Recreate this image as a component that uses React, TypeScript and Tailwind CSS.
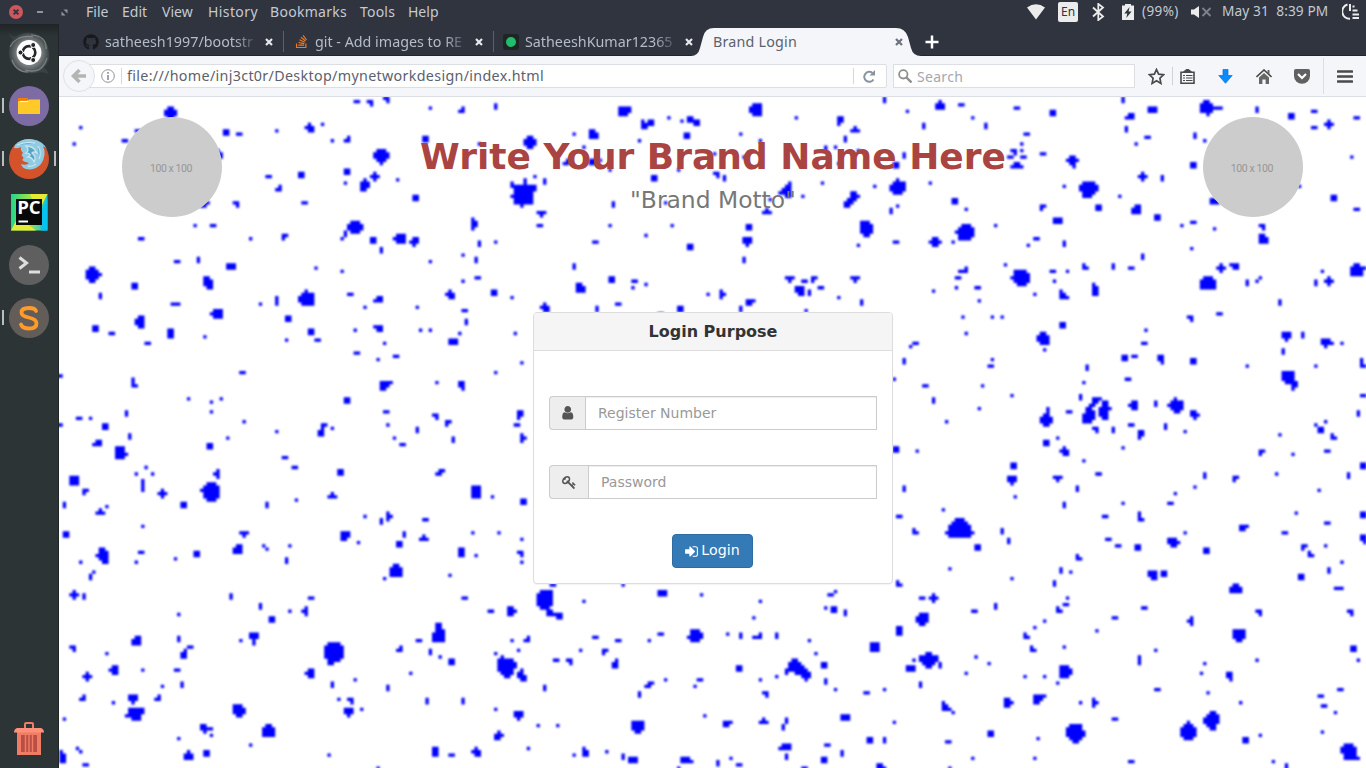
import React from "react";
import { FaGithub, FaStackOverflow } from "react-icons/fa";

/* ---------- speckled wallpaper ---------- */

const SHAPES: Record<string, string> = {
  s: "1", h: "11", v: "1/1", q: "11/11", t: "111", V: "1/1/1", H: "111/111",
  a: "01/11", c: "11/01", d: "11/10", e: "10/11", p: "010/111/010",
  u: "010/111", n: "111/010", r: "10/11/10", l: "01/11/01",
};

type Patch = { ox: number; oy: number; kx: number; marks: string };

const PATCHES: Patch[] = [
  { ox: 0, oy: 0, kx: 3, marks: "335,45,0110/1111/1111/0110 65,91,s 45,140,s 197,131,h 237,100,h 501,106,q 541,111,h 653,101,s 790,82,s 752,92,010/111/011 820,131,s 865,126,a 893,14,h 933,17,c 983,8,11/01 1114,33,s 1208,38,a 1310,28,v 1100,125,q 1261,140,s 968,180,01110/11111/11111/01110/00100 864,224,q 947,238,p 859,258,s 918,263,010/111/111/110 1016,248,s 1070,302,q 628,238,h 727,234,q 659,273,a 737,317,h 531,321,c 440,320,011/110 485,172,10/11/11 408,385,s 462,385,h 574,425,s 246,425,h 677,419,d 850,425,s 858,410,v 889,390,01110/11111/11111/01110 942,430,q 967,459,v 1023,425,0111/1111/0111 1067,433,011/111/010 1246,380,10/11/11/10 1261,439,v 1310,434,s 1212,473,s 1251,488,v 1114,493,s 1212,552,s 1256,542,h 1305,586,q 1173,592,010/111/011 1216,640,h 1075,631,s 918,631,s 960,606,011/111 874,591,h 850,523,s 771,513,s 742,602,00100/01111/11111/11111/01111 653,611,V 604,621,s 688,658,h 476,650,0111/1111/0111 246,658,h 349,621,t 447,557,110/111/111/011 517,508,H 418,488,v 354,493,h 227,566,q 124,596,v 104,532,01100/11110/11111/11110/01100" },
  { ox: 440, oy: 0, kx: 3, marks: "377,42,1111/1111/1110 447,82,1011/1111/1100 510,62,s 549,72,s 573,67,q 593,77,q 564,116,q 284,111,110/111/111 225,111,s 255,150,s 421,130,s 93,135,0110/1111/1111/0110 770,38,0111/1111/1111/0111 892,62,s 725,111,s 784,130,s 1024,72,11/11/10 1069,98,u 1039,126,v 1156,3,v 1225,43,s 1274,87,v 199,197,a 280,193,q 304,190,s 333,219,s 647,170,s 735,180,s 539,217,s 465,243,q 653,233,c 676,243,v 980,150,v 1010,150,s 1078,160,s 1019,199,s 1216,174,v 1191,204,q 107,238,s 137,253,v 39,263,v 75,288,00001000/00001000/01111111/01111111/01111110/11111110/01111110/01111110/00010000 343,321,v 500,317,s 127,350,n 122,385,h 333,385,s 519,385,s 441,415,s 289,434,h 573,449,q 225,508,v 338,547,q 406,552,h 402,572,s 441,562,s 244,572,110/111/111 39,601,s 137,631,010/111/011 294,635,v 358,621,h 544,635,q 485,650,h 627,591,s 671,591,r 725,635,v 754,616,111/110 872,546,n 916,552,h 945,547,d 965,572,h 902,581,111/111/011 931,586,v 1069,546,n 1019,601,s 1088,616,v 921,640,s 735,488,v 745,432,111/111/010 750,390,q 804,345,u 855,279,0001/0011/0111/1111/0011 813,307,s 911,297,s 970,258,s 1127,268,s 1195,270,00100/01111/11111/11111/01110 1196,327,s 1176,341,v 1294,258,s 1059,308,00110/00111/01110/11100/11000 1103,395,1110/1111/1111/1111/0110 1078,444,s 1191,434,h 1303,581,s" },
  { ox: 867, oy: 0, kx: 3, marks: "42,25,010/111/111 106,23,h 140,62,s 179,87,v 273,33,h 380,47,q 591,8,v 612,57,011/111 679,38,H 601,96,v 665,121,h 630,140,s 302,111,h 287,140,s 262,165,c 287,160,s 253,180,h 292,180,h 272,202,0110/1111 351,170,h 439,194,0110/1111/0110/0010 13,258,s 414,268,s 489,277,011110/111111/111111/011110/011100 650,238,p 709,243,v 581,297,s 87,312,q 120,336,s 350,331,d 517,331,q 631,337,011/111/111 694,361,q 395,371,H 117,405,001110/011111/111111/011111/011110 209,385,s 28,434,0110/1111/0110 82,434,s 307,444,s 331,425,h 414,439,v 650,478,v 238,503,s 111,518,001/111 96,542,h 91,572,s 23,581,s 155,572,h 160,611,s 111,658,s 199,658,s 229,658,s 283,542,011110/011111/111111/011111/001110 380,523,h 424,523,s 385,552,s 327,591,s 414,592,100/110/111 479,508,e 561,508,v 616,513,h 508,577,10/11/11/11 855,33,0110000/1111000/1111111/1111000/0010000 993,38,v 1096,57,q 1165,43,h 1165,91,h 1208,82,p 1292,62,h 807,116,v 836,131,s 802,204,q 1277,180,s 1223,302,q 1292,336,h 865,312,H 1122,268,s 802,376,h 767,385,s 865,395,s 797,454,s 1009,390,c 1012,425,110/111/111 885,513,p 926,508,111/011 845,557,01110/11111/11111/11111 963,557,v 1003,542,s 993,552,s 1169,557,v 1189,523,s 1208,552,p 1296,518,01100/11111/11110/11110 1061,616,v 880,650,h 792,658,h" },
  { ox: 0, oy: 213, kx: 3, marks: "110,55,q 159,70,h 242,36,001/111/111/011 335,70,11/11/11 266,99,h 437,80,s 688,26,q 683,89,s 756,65,q 776,89,h 889,60,s 958,55,111/011 977,99,s 957,148,s 894,129,h 1011,139,h 1085,60,s 1114,60,s 1202,70,s 1222,36,v 1183,94,H 1369,70,s 1388,158,s 1310,188,s 1216,1,h 5,197,h 551,187,h 227,217,10/10/11 388,266,s 457,276,s 487,266,s 457,305,s 556,335,s 202,310,v 60,325,h 94,325,s 5,344,h 139,349,q 212,379,v 114,399,011/111 187,428,1110/1110/1111/1110 452,408,q 506,384,s 653,364,s 820,354,s 864,270,q 790,359,011/010/110/110 677,442,h 707,472,h 844,486,q 981,227,1111/1110/1100 1133,217,s 1207,226,11/11/01 982,305,h 986,344,s 1006,384,s 1031,403,h 1075,359,v 1130,320,c 1168,339,d 1183,388,v 1384,315,11/11/10 1374,344,h 1393,384,r 1143,486,011/110 1251,545,111/111/111/111 1300,560,s 1394,575,q 1241,668,s 1320,668,s 1388,687,s 1099,629,h 1094,681,u 1035,673,v 990,619,r 967,633,v 918,619,s 860,675,111/111/110 820,555,u 712,570,s 624,584,v 555,672,n 453,545,001110/011111/111111/011111/011111/001110 472,491,l 374,584,q 310,550,p 251,526,1/1/1/1 261,472,s 232,491,s 280,491,s 46,511,111/111/111 79,545,d 16,584,v 124,605,u 143,589,s 251,648,s 21,673,q" },
  { ox: 837, oy: 213, kx: 3, marks: "201,21,s 289,21,s 319,21,s 211,70,s 500,45,q 442,85,0110/1111/1111/0111 446,119,s 44,109,s 60,99,h 24,153,v 289,148,s 285,168,h 88,227,h 260,227,s 113,271,v 348,256,s 250,295,s 152,335,s -6,207,s 0,418,q 64,423,s 573,173,v 563,217,s 554,261,v 451,320,0010/0010/0110/1111/1111/0110 519,305,h 452,398,q 485,384,s 506,423,010/111/011 353,467,q 348,510,111/111/010 357,560,s 485,505,n 544,535,v 505,584,v 563,453,s 608,491,h 24,535,v 142,599,s 5,619,h 58,663,e 319,663,v 338,687,s 192,653,000111000/001111100/011111110/011111110/111111111/011111110 588,300,000111/000110/001100/011000/011100/111100/111100/111000 627,300,0110/0110/1111/1110/1110/0110 598,359,c 652,359,v 681,413,s 706,344,h 736,373,11/11/10 713,286,011/111/011 696,207,h 686,144,q 716,139,h 745,99,h 750,60,s 794,148,11/11/01 892,153,q 883,25,c 971,11,h 779,281,v 809,349,v 840,286,00100/01111/11111/01111/00110 867,364,s 896,314,110/111/010 1053,168,s 1172,79,111/111/010 1220,75,v 1162,124,v 1259,168,s 1293,99,1110/1111/0100 1338,99,s 1401,158,10/10/11 1182,212,11110/11110/11110/01111/00011/00010 1401,256,h 1387,310,v 1259,344,s 1289,335,s 1274,359,q 1313,379,e 1151,374,s 1191,433,s 1293,423,h 1097,428,d 1406,467,q 1357,496,v 1142,491,s 1269,540,s 1019,505,d 926,496,v 896,531,s 838,550,s 823,580,h 681,580,s 627,619,h 735,619,10/10/11 637,687,h 828,687,t 867,668,s 1200,609,s 1293,638,h 1166,668,h 1042,653,111/110 1401,614,q 1401,682,q" },
  { ox: -59, oy: 441, kx: 2.376, marks: "245,52,0110/0111/1111/0111/0011 192,72,s 335,43,h 323,72,s 417,62,s 467,47,q 222,101,s 215,116,v 176,170,p 199,175,v 565,34,011/111/111 627,23,s 634,33,s 688,23,s 681,67,v 852,13,s 949,18,q 1096,43,11/11/11 1131,52,s 1240,5,s 1237,47,c 1240,72,s 1069,111,s 940,98,0110/1111/1111/1111 913,121,s 1104,180,h 1165,219,h 1216,219,110/111/110 1313,140,h 1481,140,s 1295,184,01111/11111/11111/11111/11111/01110 1318,228,11000/11111/00011 1387,189,s 549,175,v 619,204,v 645,243,q 688,219,s 725,219,l 739,180,h 425,229,s 424,302,v 324,307,011/111/111 173,331,c 253,347,s 452,327,h 437,347,01/11/11 420,396,h 339,396,s 270,395,011/111/011 207,415,p 197,480,a 269,493,s 316,483,111/111/010 374,480,a 386,444,s 432,439,v 320,527,011111/011111/111110/001110 603,301,111/111/010/010 571,307,s 794,346,011110/111111/111111/111111/111111/011110/011000 736,405,011/111/011 789,439,v 844,425,s 805,484,s 832,488,c 859,513,s 828,521,111/111/010 568,518,1110/1111/1111/0110 490,572,1100/1111/0100 503,591,s 638,577,0110/1111/1111/1111 596,621,s 425,601,s 448,653,010/111/111 490,646,q 153,542,s 184,631,s 192,640,s 149,655,10/11/11/11 204,680,h 782,650,s 898,687,s 976,405,s 949,332,a 995,307,h 1041,284,0110/0110/0111/1111/1111/1111 1022,342,v 1046,356,s 1073,371,q 1217,307,s 1252,302,a 1178,347,s 1232,337,s 1205,386,010000/111110/111111/111111/111110/011110/001100 1240,410,010/110/111/011 922,449,v 1014,488,v 1100,488,v 1294,449,v 1178,513,s 1232,531,111/111/010 1278,562,s 1325,562,s 1185,592,010/111/110 1132,641,010/111/011 1034,641,11/11/11 1073,650,h 1255,631,s 1414,297,h 1469,307,h 1543,307,s 1380,337,s 1437,341,d 1321,366,h 1353,371,c 1461,376,01/11/11 1543,439,011/110 1519,469,v 1516,565,1111/1111/1111/0110 1364,650,s 1390,641,10/11/11 1441,640,s 1481,655,v 1504,665,H" },
  { ox: 601, oy: 441, kx: 2.221, marks: "5,165,H 0,288,h 706,28,q 775,8,v 644,92,s 782,121,s 531,136,e 582,180,h 607,180,p 93,170,s 223,189,s 390,160,s 379,170,h 368,210,s 386,214,q 412,224,v 208,239,s 78,293,01110/01111/11111/01110 150,288,s 179,293,v 217,293,001/111 259,293,v 332,307,s 347,347,s 307,396,00110000/01111000/01111100/11111110/10011111/00000111/00000010 365,381,q 368,430,v 390,454,s 259,415,s 223,425,s 176,391,q 88,425,h 77,444,s 12,425,s 235,469,c 459,464,h 499,454,s 476,327,111/111/111 531,278,11/11/11 583,243,0111/1111/1111/0110 698,219,h 746,204,v 597,366,001100/111111/111111/011110/001100 565,366,s 622,381,v 557,391,H 578,440,v 680,405,s 702,356,s 731,376,s 637,503,100/110/111 652,523,s 520,552,s 412,538,H 99,532,s 150,557,111/110 230,547,u 281,547,v 274,567,v 466,606,q 499,606,v 371,621,h 405,646,v 365,665,q 279,626,0111/1111 281,655,v 176,680,h 157,660,s 128,675,v 58,665,1110/1111 41,687,s 321,687,h 490,682,110/111 644,687,s 695,660,s 640,611,h 735,587,q 774,493,110/111/110 843,484,1111/1110/1100 810,415,s 855,415,s 883,435,s 901,401,1110/1111/1111/1110 898,327,s 828,332,e 814,293,e 832,268,s 854,249,s 887,214,e 901,200,h 905,180,s 876,136,v 890,97,v 912,101,s 930,58,e 996,3,h 1018,23,h 1061,28,q 1142,13,1110/1111/0110 1213,38,q 1095,111,111/111/011 1119,106,q 1279,152,0110/1111/1111 1424,116,q 1431,28,d 1445,48,e 1478,23,s 1514,72,s 1485,97,v 1508,151,t 1562,8,11/01 1076,210,h 1010,239,h 970,278,s 1178,249,l 1329,224,c 1533,224,c 1286,292,1111/1111/1111/0110 1540,332,q 1551,366,s 1326,366,s 1101,337,s 1064,366,V 1210,376,s 1202,405,s 1265,415,11/11/01 1105,454,h 1217,464,s 1290,493,s 1511,454,h 1467,474,h 1475,503,h 1500,523,s 1471,582,s 934,493,s 966,493,r 1010,542,h 923,586,011110/111110/111111/111111/011110/001100 839,601,s 832,660,s 1046,670,h 1173,577,00100/01110/11111/11111/11111/01110 1225,547,00110/01111/11111/11111/01110/00110 1300,606,q 1333,592,s 1362,670,s 1391,682,v 1533,641,011100/111110/111110/011110/011111" },
];

const CELL = 1307 / 400;

function specklePath(): string {
  let d = "";
  for (const { ox, oy, kx, marks } of PATCHES) {
    for (const mark of marks.split(" ")) {
      const [mx, my, key] = mark.split(",");
      const rows = (SHAPES[key] ?? key).split("/");
      const col = Math.round((Number(mx) / kx + ox) / CELL - 0.1 - rows[0].length / 2);
      const row = Math.round((Number(my) / 3 + oy) / CELL + 0.2 - rows.length / 2);
      rows.forEach((bits, r) => {
        for (const run of bits.matchAll(/1+/g)) {
          const x = (col + run.index! + 0.16) * CELL;
          const y = (row + r - 0.12) * CELL;
          const w = run[0].length * CELL;
          d += `M${x.toFixed(2)} ${y.toFixed(2)}h${w.toFixed(2)}v${(CELL + 0.02).toFixed(2)}h-${w.toFixed(2)}z`;
        }
      });
    }
  }
  return d;
}

const SPECKLES = specklePath();

/* ---------- top panel ---------- */

function TopPanel() {
  return (
    <header className="flex h-6 shrink-0 items-center bg-[#2f343f] text-[14px] text-[#c5cad3]">
      <div className="flex w-[86px] items-center pl-[9px]">
        <svg className="h-[14px] w-[14px]" viewBox="0 0 14 14">
          <circle cx="7" cy="7" r="7" fill="#cc575d" />
          <path d="M4.6 4.6l4.8 4.8M9.4 4.6l-4.8 4.8" stroke="#2f343f" strokeWidth="2" />
        </svg>
        <span className="ml-[14px] h-[2px] w-[6px] bg-[#90959f]" />
        <svg className="ml-[18px] h-[7px] w-[7px]" viewBox="0 0 7 7">
          <path d="M2.5 0.5H6.5V4.5zM0.5 2.5V6.5H4.5z" fill="#90959f" />
        </svg>
      </div>
      <nav className="flex pb-[2px]">
        <span className="w-[36px]">File</span>
        <span className="w-[40px]">Edit</span>
        <span className="w-[46px]">View</span>
        <span className="w-[62px] tracking-[0.4px]">History</span>
        <span className="w-[90px] tracking-[0.3px]">Bookmarks</span>
        <span className="w-[48px] tracking-[0.2px]">Tools</span>
        <span>Help</span>
      </nav>
      <div className="ml-auto flex items-center pr-[7px]">
        <svg className="h-[16px] w-[18px]" viewBox="0 0 18 16">
          <path d="M0 3.5Q9 -3 18 3.5L9 15.5z" fill="#ececec" />
        </svg>
        <span className="ml-[13px] flex h-5 w-5 items-center justify-center rounded-[2px] bg-[#ececec] text-[12px] text-[#2f343f]">En</span>
        <svg className="ml-[14px] h-[18px] w-[13px]" viewBox="0 0 13 18">
          <path d="M1 4.5l10 9-4.7 3.6V.9L11 4.5 1 13.5" fill="none" stroke="#ececec" strokeWidth="1.8" />
        </svg>
        <svg className="ml-[17px] h-[16px] w-[12px]" viewBox="0 0 12 16">
          <path d="M0 1.5h3V0h6v1.5h3V16H0z" fill="#ececec" />
          <path d="M7.6 3L2.3 9.6h3L4.3 14l5.3-6.6H6.6z" fill="#2f343f" />
        </svg>
        <span className="ml-[8px] w-[49px] pb-px text-[13.5px] tracking-[0.4px] whitespace-nowrap">(99%)</span>
        <svg className="h-[12px] w-[21px]" viewBox="0 0 21 12">
          <path d="M0 3.5h3L8 0v12L3 8.5H0z" fill="#ececec" />
          <path d="M11.5 2l8 8M19.500 2l-8 8" stroke="#7d828c" strokeWidth="1.8" />
        </svg>
        <span className="ml-[10px] w-[120px] pb-px text-[13.7px] tracking-[0.1px] whitespace-pre">May 31  8:39 PM</span>
        <svg className="h-[17px] w-[17px]" viewBox="0 0 17 17">
          <path d="M5.500 1.500A7.300 7.300 0 0 0 8 15.800M8 1v7" fill="none" stroke="#ececec" strokeWidth="2" />
          <path d="M10.500 3.500h2M10.500 7.500h5M10.500 11.500h6.500M10.500 15h6.500" stroke="#ececec" strokeWidth="2" />
        </svg>
      </div>
    </header>
  );
}

/* ---------- launcher ---------- */

function LauncherItem({ children, left, right }: { children: React.ReactNode; left?: boolean; right?: boolean }) {
  return (
    <div className="flex h-[53px] shrink-0 items-center">
      <span className={left ? "h-[15px] w-[4px] border-r-2 border-[#b9bdbd]" : "w-[4px]"} />
      <svg className="ml-[4px] h-[42px] w-[42px]" viewBox="0 0 42 42">{children}</svg>
      <span className={right ? "ml-[4px] h-[15px] w-[2px] bg-[#b9bdbd]" : "w-[2px]"} />
    </div>
  );
}

function Launcher() {
  return (
    <aside className="flex w-[59px] shrink-0 flex-col border-r border-[#202527] bg-linear-to-b from-[#1f2426] via-[#2d3436] via-[12px] to-[#2d3436] pt-[2px]">
      <LauncherItem>
        <defs>
          <radialGradient id="halo"><stop offset=".5" stopColor="#8b9091" /><stop offset="1" stopColor="#3a4143" /></radialGradient>
        </defs>
        <path d="M1 1Q5 7 10 3Q20-2 31 3Q40 9 41 20Q43 30 36 35Q40 40 41 42Q34 39 28 41Q14 43 7 35Q0 29 1 18Q2 9 5 7Q1 4 1 1z" fill="url(#halo)" />
        <path d="M2 15Q9 2 25 5M17 38Q34 43 39 26M4 28Q8 40 20 40M23 3Q39 4 38 17" fill="none" stroke="#aeb3b3" strokeOpacity=".5" strokeWidth="1.200" />
        <circle cx="21" cy="20.500" r="12.400" fill="#fff" />
        <circle cx="21" cy="20.500" r="6.300" fill="none" stroke="#252829" strokeWidth="2.700" />
        <path d="M21 20.500L10 20.500M21 20.500L26.500 10.500M21 20.500L26.500 30.500" stroke="#fff" strokeWidth="1.200" />
        <circle cx="12.500" cy="20.500" r="2.500" fill="#252829" stroke="#fff" />
        <circle cx="25.200" cy="13" r="2.500" fill="#252829" stroke="#fff" />
        <circle cx="25.200" cy="28" r="2.500" fill="#252829" stroke="#fff" />
        <circle cx="21" cy="20.500" r="4.500" fill="#fff" />
      </LauncherItem>
      <LauncherItem left>
        <circle cx="21" cy="21" r="20" fill="#7d6ba4" />
        <path d="M10 13h10v4h-10z" fill="#f57c00" />
        <path d="M10 16h9l2-1.500h11V29H10z" fill="#ffca28" />
        <path d="M12 16.500h8" stroke="#fff" strokeWidth="1.200" />
      </LauncherItem>
      <LauncherItem left right>
        <circle cx="21" cy="21" r="20" fill="#d5532a" />
        <path d="M7 7Q14 0 24 1.300Q36 3 40 13Q38 9 35 8Q39 17 33 26Q27 33 18 31Q14 30 13 26Q18 28 21 25Q16 24 14 22Q17 20 14 18Q13 16 15 15Q12 12 13 9Q9 11 6 10z" fill="#8fcbe2" />
        <path d="M18 8Q26 8 29 15Q26 13 24 15Q29 19 26 24Q24 19 20 19Q25 16 18 15Q22 12 18 8zM9 7Q18 3 27 5M30 8Q34 14 31 21M28 26Q24 29 20 28" fill="#56a5c4" stroke="#c5e5ef" strokeWidth="1.300" />
      </LauncherItem>
      <LauncherItem>
        <defs>
          <linearGradient id="pc"><stop stopColor="#21d789" /><stop offset=".5" stopColor="#9be34e" /><stop offset="1" stopColor="#07c3e5" /></linearGradient>
        </defs>
        <path d="M3 3h36.500v36.500H3z" fill="url(#pc)" />
        <path d="M22 3h17.500l-10 20zM3 39.500L10 26l18 13.500z" fill="#e6ea37" />
        <path d="M39.500 8v31.500H33L31 24z" fill="#08c2ee" />
        <path d="M8 8h26v26H8z" fill="#080808" />
        <path d="M10.500 30.500h9.500" stroke="#fff" strokeWidth="2" />
        <text x="9.200" y="23" fill="#fff" fontFamily="Open Sans, sans-serif" fontWeight="700" fontSize="17" textLength="23.500" lengthAdjust="spacingAndGlyphs">PC</text>
      </LauncherItem>
      <LauncherItem>
        <circle cx="21" cy="21" r="20" fill="#5f5f5f" />
        <path d="M11.500 13.500l7 5.500-7 5.500" fill="none" stroke="#dedede" strokeWidth="3" />
        <path d="M21 28h11" stroke="#dedede" strokeWidth="3" />
      </LauncherItem>
      <LauncherItem left>
        <circle cx="21" cy="21" r="20" fill="#625d59" />
        <path d="M28 14Q27 11 21 11Q13.500 11 13.500 15.500Q13.500 19 20.500 20.500Q28.500 22 28.500 26.500Q28.500 31.500 21 31.500Q14.500 31.500 13 27.500" fill="none" stroke="#ff9b2b" strokeWidth="3.800" strokeLinecap="round" />
      </LauncherItem>
      <div className="mt-auto flex justify-center pb-[12px]">
        <svg className="h-[34px] w-[30px]" viewBox="0 0 30 34">
          <path d="M11 6V2Q11 1 12 1H18Q19 1 19 2V6" fill="none" stroke="#f07c66" strokeWidth="2" />
          <path d="M3 10h24v23H3z" fill="#f07c66" />
          <path d="M3 6h24q3 1 3 4.500H0Q0 7 3 6z" fill="#ff917b" />
          <path d="M7 13h16v17H7z" fill="#b94e42" />
          <path d="M11.500 13v17M15 13v17M18.500 13v17" stroke="#f07c66" strokeWidth="1.500" />
        </svg>
      </div>
    </aside>
  );
}

/* ---------- browser chrome ---------- */

function CloseMark({ color }: { color: string }) {
  return (
    <svg className="h-2 w-2 shrink-0" viewBox="0 0 8 8">
      <path d="M1 1l6 6M7 1l-6 6" stroke={color} strokeWidth="2.200" />
    </svg>
  );
}

function Tab({ icon, title, divider }: { icon: React.ReactNode; title: string; divider?: boolean }) {
  return (
    <div className="flex h-full w-[210px] shrink-0 items-center pt-[4px]">
      <span className="flex h-4 w-4 items-center justify-center">{icon}</span>
      <span className="ml-[6px] w-[154px] overflow-hidden text-[14.3px] whitespace-nowrap text-[#b4bcc8] [mask-image:linear-gradient(to_right,#000_130px,transparent_154px)]">{title}</span>
      <span className="ml-[6px] flex w-2"><CloseMark color="#e6e8ec" /></span>
      {divider && <span className="ml-[10px] h-[21px] w-px bg-[#5b606b]" />}
    </div>
  );
}

function TabStrip() {
  return (
    <div className="flex h-8 shrink-0 items-center border-b border-[#22262f] bg-[#2f343f] pl-[24px]">
      <Tab divider icon={<FaGithub size={16} color="#17191d" />} title="satheesh1997/bootstr" />
      <Tab divider icon={<FaStackOverflow size={15} color="#ee7a26" />} title="git - Add images to RE" />
      <Tab
        icon={<span className="flex h-4 w-4 items-center justify-center rounded-[3px] bg-[#1f2424]"><span className="h-[10px] w-[10px] rounded-full bg-[#20bd6b]" /></span>}
        title="SatheeshKumar12365"
      />
      <div className="relative -ml-[22px] flex h-8 w-[236px] shrink-0 items-center pt-[4px] pl-[22px]">
        <svg className="absolute top-[4px] left-0 h-[29px] w-[236px]" viewBox="0 0 236 29">
          <path d="M0 29V28Q7 28 9 20L12 9Q14 0 23 0H205Q214 0 217 9L220 20Q222 28 230 28H236V29z" fill="#f5f6f9" />
        </svg>
        <span className="relative w-[182px] text-[14.300px] tracking-[0.2px] text-[#5c616c]">Brand Login</span>
        <span className="relative flex"><CloseMark color="#6d727c" /></span>
      </div>
      <svg className="-ml-[2px] mt-[4px] h-[14px] w-[14px]" viewBox="0 0 14 14">
        <path d="M7 .500v13M.500 7h13" stroke="#fff" strokeWidth="2.500" />
      </svg>
    </div>
  );
}

function Toolbar() {
  return (
    <div className="flex h-[41px] shrink-0 items-center border-b border-[#dbdee3] bg-[#f5f6f9] pl-[4px] text-[14px] text-[#5c616c]">
      <div className="z-10 flex h-[32px] w-[32px] items-center justify-center rounded-full border border-[#dfe1e6] bg-[#f5f6f9]">
        <svg className="h-[16px] w-[16px]" viewBox="0 0 16 16">
          <path d="M8.500 2L2.500 8l6 6M3 8h12" fill="none" stroke="#b4b4b4" strokeWidth="3.500" />
        </svg>
      </div>
      <div className="-ml-[8px] flex h-[24px] w-[800px] items-center rounded-[2px] border border-[#dbdee3] bg-white pl-[13px]">
        <svg className="h-[14px] w-[14px]" viewBox="0 0 14 14">
          <circle cx="7" cy="7" r="6.300" fill="none" stroke="#90939a" />
          <path d="M7 6v5M7 3v1.700" stroke="#90939a" strokeWidth="1.700" />
        </svg>
        <span className="ml-[6px] h-4 w-px bg-[#d5d8de]" />
        <span className="ml-[5px] grow text-[14.300px] tracking-[0.320px] whitespace-nowrap">file:///home/inj3ct0r/Desktop/mynetworkdesign/index.html</span>
        <span className="mr-[9px] h-4 w-px bg-[#d5d8de]" />
        <svg className="mr-[10px] h-[13px] w-[13px]" viewBox="0 0 13 13">
          <path d="M10.500 9.500A5 5 0 1 1 9.500 3" fill="none" stroke="#8a93a0" strokeWidth="2" />
          <path d="M12 0v5.500H6.500z" fill="#8a93a0" />
        </svg>
      </div>
      <div className="ml-[6px] flex h-[24px] w-[242px] items-center border border-[#dbdee3] bg-white pl-[4px]">
        <svg className="h-[14px] w-[14px]" viewBox="0 0 14 14">
          <circle cx="5.300" cy="5.300" r="4.200" fill="none" stroke="#8f8f8f" strokeWidth="1.800" />
          <path d="M8.500 8.500l5 5" stroke="#8f8f8f" strokeWidth="2.400" />
        </svg>
        <span className="ml-[5px] tracking-[0.300px] text-[#a4a7ae]">Search</span>
      </div>
      <div className="flex h-full items-center text-[#4a4a4a]">
        <svg className="ml-[13px] h-[17px] w-[17px]" viewBox="0 0 17 17">
          <path d="M8.500 1.500l2.100 4.700 5 .500-3.700 3.500 1 5.200-4.400-2.600-4.400 2.600 1-5.200L1.400 6.700l5-.500z" fill="none" stroke="currentColor" strokeWidth="1.700" />
        </svg>
        <span className="ml-[7px] h-[18px] w-px bg-[#cfd2d7]" />
        <svg className="ml-[7px] h-[15px] w-[15px]" viewBox="0 0 15 15">
          <path d="M1 3.200h13v11H1z" fill="none" stroke="currentColor" strokeWidth="1.600" />
          <path d="M3.500 3L7.500 0l4 3M3 6.500h2M3 9h2M3 11.500h2M6 6.500h6.500M6 9h6.500M6 11.500h6.500" fill="currentColor" stroke="currentColor" strokeWidth="1.200" />
        </svg>
        <svg className="ml-[23px] h-[15px] w-[15px]" viewBox="0 0 15 15">
          <path d="M5 .500h5v6h4.200L7.500 14.300.8 6.500H5z" fill="#0c8bff" stroke="#0670d8" strokeWidth=".7" />
        </svg>
        <svg className="ml-[23px] h-[15px] w-[16px]" viewBox="0 0 16 15">
          <path d="M.500 8L8 1l7.500 7" fill="none" stroke="currentColor" strokeWidth="1.600" />
          <path d="M3 8.500L8 4l5 4.500V15H9.600v-4.500H6.400V15H3zM11.500 1h2v4.500l-2-2z" fill="#666" />
        </svg>
        <svg className="ml-[22px] h-[15px] w-[16px]" viewBox="0 0 16 15">
          <path d="M1.800 0h12.400Q16 0 16 1.800V7A8 7.700 0 0 1 0 7V1.800Q0 0 1.800 0z" fill="#606060" />
          <path d="M4 5l4 4 4-4" fill="none" stroke="#fff" strokeWidth="2.200" />
        </svg>
        <span className="ml-[13px] h-9 w-px bg-[#dbdee3]" />
        <svg className="ml-[13px] h-[13px] w-[16px]" viewBox="0 0 16 13">
          <path d="M1 1.500h14M1 6.500h14M1 11.500h14" stroke="currentColor" strokeWidth="2.600" strokeLinecap="round" />
        </svg>
      </div>
    </div>
  );
}

/* ---------- page ---------- */

const USER = "M1536 1399q0 109-62.5 187t-150.5 78h-854q-88 0-150.5-78t-62.5-187q0-85 8.5-160.5t31.5-152 58.5-131 94-89 134.5-34.5q131 128 313 128t313-128q76 0 134.5 34.5t94 89 58.5 131 31.5 152 8.5 160.5zm-256-887q0 159-112.5 271.5t-271.5 112.5-271.5-112.5-112.5-271.5 112.5-271.5 271.5-112.5 271.5 112.5 112.5 271.5z";
const KEY = "M832 512q0-80-56-136t-136-56-136 56-56 136q0 42 19 83-41-19-83-19-80 0-136 56t-56 136 56 136 136 56 136-56 56-136q0-42-19-83 41 19 83 19 80 0 136-56t56-136zm851 704q0 17-49 66t-66 49q-9 0-28.5-16t-36.5-33-38.5-40-24.5-26l-96 96 220 220q28 28 28 68 0 42-39 81t-81 39q-40 0-68-28l-671-671q-176 131-365 131-163 0-265.5-102.5t-102.5-265.5q0-160 95-313t248-248 313-95q163 0 265.5 102.5t102.5 265.5q0 189-131 365l355 355 96-96q-3-3-26-24.5t-40-38.5-33-36.5-16-28.5q0-17 49-66t66-49q13 0 23 10 6 6 46 44.5t82 79.5 86.5 86 73 78 28.5 41z";
const SIGN_IN = "M1184 896q0 26-19 45l-544 544q-19 19-45 19t-45-19-19-45v-288h-448q-26 0-45-19t-19-45v-384q0-26 19-45t45-19h448v-288q0-26 19-45t45-19 45 19l544 544q19 19 19 45zm352-352v704q0 119-84.5 203.5t-203.5 84.5h-320q-13 0-22.5-9.5t-9.500-22.5q0-4-1-20t-.5-26.5 3-23.5 10-19.5 20.5-6.5h320q66 0 113-47t47-113v-704q0-66-47-113t-113-47h-312l-11.5-1-11.5-3-8-5.5-7-9-2-13.5q0-4-1-20t-.5-26.5 3-23.5 10-19.5 20.5-6.5h320q119 0 203.5 84.5t84.5 203.5z";

function Logo() {
  return (
    <div className="flex h-[100px] w-[100px] items-center justify-center rounded-full bg-[#ccc] pt-[3px] pr-[2px] font-[Roboto,sans-serif] text-[10.500px] tracking-[-0.400px] text-[#969696]">
      100 x 100
    </div>
  );
}

function Field({ icon, width, iconSize, placeholder }: { icon: string; width: string; iconSize: string; placeholder: string }) {
  return (
    <div className="flex h-[34px]">
      <span className={`flex shrink-0 items-center justify-center rounded-l-[4px] border border-r-0 border-[#ccc] bg-[#eee] ${width}`}>
        <svg className={iconSize} viewBox="0 0 1792 1792"><path d={icon} fill="#555" /></svg>
      </span>
      <span className="flex grow items-center border border-[#ccc] bg-white pl-3 text-[14px] text-[#999] shadow-[inset_0_1px_1px_rgba(0,0,0,.075)]">{placeholder}</span>
    </div>
  );
}

function Page() {
  return (
    <main className="relative grow overflow-hidden bg-white font-['DejaVu_Sans',sans-serif]">
      <svg className="absolute top-0 left-0 h-[671px] w-[1307px]" viewBox="0 0 1307 671">
        <defs>
          <filter id="soft" filterUnits="userSpaceOnUse" x="0" y="0" width="1307" height="671" colorInterpolationFilters="sRGB">
            <feGaussianBlur stdDeviation="0.8" />
          </filter>
        </defs>
        <path d={SPECKLES} fill="#00f" filter="url(#soft)" />
      </svg>
      <div className="relative flex h-full flex-col">
        <div className="flex justify-between pt-[20px] pr-[63px] pl-[63px]">
          <Logo />
          <div className="flex flex-col items-center pl-px whitespace-nowrap">
            <h1 className="pt-[20px] text-[36px] leading-[40px] font-bold text-[#a94442]">Write Your Brand Name Here</h1>
            <p className="mt-[10px] text-[23.400px] leading-[26px] text-[#777]">"Brand Motto"</p>
          </div>
          <Logo />
        </div>
        <section className="mt-[95px] ml-[474px] flex h-[272px] w-[360px] flex-col rounded-[4px] border border-[#ddd] bg-white shadow-[0_1px_1px_rgba(0,0,0,.05)]">
          <h2 className="flex h-[38px] shrink-0 items-center justify-center rounded-t-[3px] border-b border-[#ddd] bg-[#f5f5f5] text-[16px] font-bold text-[#333]">Login Purpose</h2>
          <form className="flex flex-col px-[15px] pt-[45px]">
            <Field icon={USER} width="w-[36px]" iconSize="h-[15.500px] w-[15.500px]" placeholder="Register Number" />
            <div className="mt-[35px]"><Field icon={KEY} width="w-[39px]" iconSize="h-[14.500px] w-[14.500px]" placeholder="Password" /></div>
            <button type="button" className="mt-[35px] ml-[123px] flex h-[34px] w-[81px] items-center justify-center rounded-[4px] border border-[#2e6da4] bg-[#337ab7] text-[14.200px] text-white">
              <svg className="mr-[3px] h-[15px] w-[13px]" viewBox="0 0 1536 1792"><path d={SIGN_IN} fill="#fff" /></svg>
              Login
            </button>
          </form>
        </section>
      </div>
    </main>
  );
}

export default function App() {
  return (
    <div className="flex h-[768px] w-[1366px] flex-col overflow-hidden font-['Noto_Sans',sans-serif]">
      <TopPanel />
      <div className="flex min-h-0 grow">
        <Launcher />
        <div className="flex min-w-0 grow flex-col">
          <TabStrip />
          <Toolbar />
          <Page />
        </div>
      </div>
    </div>
  );
}
